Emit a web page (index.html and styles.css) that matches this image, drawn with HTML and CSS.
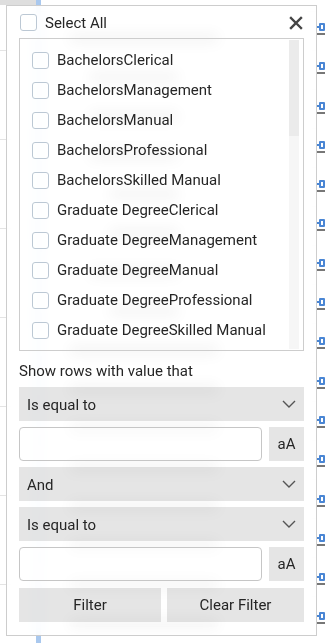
FILE: index.html
```html
<!DOCTYPE html>
<html>
<head>
<meta charset="utf-8">
<link rel="stylesheet" href="styles.css">
</head>
<body>
<div class="bg">
  <div class="bg-left"><div class="bg-corner"></div></div>
  <div class="bg-stripe"></div>
  <div class="bg-main">
    <div class="bg-row"><i class="ghost g1"></i></div>
    <div class="bg-row"><i class="ghost g2"></i></div>
    <div class="bg-row"><i class="ghost g2"></i></div>
    <div class="bg-row"><i class="ghost g2"></i></div>
    <div class="bg-row"><i class="ghost g3"></i></div>
    <div class="bg-row"><i class="ghost g3"></i></div>
    <div class="bg-row"><i class="ghost g2"></i></div>
    <div class="bg-row"><i class="ghost g3"></i></div>
    <div class="bg-row"><i class="ghost g1"></i></div>
    <div class="bg-row"><i class="ghost g1"></i></div>
    <div class="bg-row"><i class="ghost g1"></i></div>
    <div class="bg-row"><i class="ghost g1"></i></div>
    <div class="bg-row"><i class="ghost g1"></i></div>
    <div class="bg-row"><i class="ghost g1"></i></div>
    <div class="bg-row"><i class="ghost g1"></i></div>
    <div class="bg-row"><i class="ghost g1"></i></div>
  </div>
  <div class="bg-right">
    <div class="link"><i class="lk-line"></i><i class="lk-box"></i></div>
    <div class="link"><i class="lk-line"></i><i class="lk-box"></i></div>
    <div class="link"><i class="lk-line"></i><i class="lk-box"></i></div>
    <div class="link"><i class="lk-line"></i><i class="lk-box"></i></div>
    <div class="link"><i class="lk-line"></i><i class="lk-box"></i></div>
    <div class="link"><i class="lk-line"></i><i class="lk-box"></i></div>
    <div class="link"><i class="lk-line"></i><i class="lk-box"></i></div>
    <div class="link"><i class="lk-line"></i><i class="lk-box"></i></div>
    <div class="link"><i class="lk-line"></i><i class="lk-box"></i></div>
    <div class="link"><i class="lk-line"></i><i class="lk-box"></i></div>
    <div class="link"><i class="lk-line"></i><i class="lk-box"></i></div>
    <div class="link"><i class="lk-line"></i><i class="lk-box"></i></div>
    <div class="link"><i class="lk-line"></i><i class="lk-box"></i></div>
    <div class="link"><i class="lk-line"></i><i class="lk-box"></i></div>
    <div class="link"><i class="lk-line"></i><i class="lk-box"></i></div>
    <div class="link"><i class="lk-line"></i><i class="lk-box"></i></div>
  </div>
</div>

<div class="popup">
  <div class="head">
    <span class="cb"></span>
    <span class="head-label">Select All</span>
    <svg class="close" width="14" height="14" viewBox="0 0 14 14"><path d="M2 2 L12 12 M12 2 L2 12" stroke="#444" stroke-width="2.4" stroke-linecap="square" fill="none"/></svg>
  </div>
  <div class="list">
    <div class="item"><span class="cb"></span><span>BachelorsClerical</span></div>
    <div class="item"><span class="cb"></span><span>BachelorsManagement</span></div>
    <div class="item"><span class="cb"></span><span>BachelorsManual</span></div>
    <div class="item"><span class="cb"></span><span>BachelorsProfessional</span></div>
    <div class="item"><span class="cb"></span><span>BachelorsSkilled Manual</span></div>
    <div class="item"><span class="cb"></span><span>Graduate DegreeClerical</span></div>
    <div class="item"><span class="cb"></span><span>Graduate DegreeManagement</span></div>
    <div class="item"><span class="cb"></span><span>Graduate DegreeManual</span></div>
    <div class="item"><span class="cb"></span><span>Graduate DegreeProfessional</span></div>
    <div class="item"><span class="cb"></span><span>Graduate DegreeSkilled Manual</span></div>
    <div class="scrollbar"><div class="thumb"></div></div>
  </div>
  <div class="label">Show rows with value that</div>
  <div class="controls">
    <div class="select"><span>Is equal to</span><svg class="chev" width="14" height="8" viewBox="0 0 14 8"><path d="M1 1 L7 7 L13 1" stroke="#555" stroke-width="1.4" fill="none"/></svg></div>
    <div class="input-row"><div class="input"></div><div class="case">aA</div></div>
    <div class="select"><span>And</span><svg class="chev" width="14" height="8" viewBox="0 0 14 8"><path d="M1 1 L7 7 L13 1" stroke="#555" stroke-width="1.4" fill="none"/></svg></div>
    <div class="select"><span>Is equal to</span><svg class="chev" width="14" height="8" viewBox="0 0 14 8"><path d="M1 1 L7 7 L13 1" stroke="#555" stroke-width="1.4" fill="none"/></svg></div>
    <div class="input-row"><div class="input"></div><div class="case">aA</div></div>
    <div class="buttons"><div class="btn btn-filter">Filter</div><div class="btn btn-clear">Clear Filter</div></div>
  </div>
</div>
</body>
</html>
```
FILE: styles.css
```css
* { box-sizing: border-box; }
html, body { margin: 0; padding: 0; }
body {
  width: 325px;
  height: 643px;
  overflow: hidden;
  position: relative;
  background: #fff;
  font-family: Roboto, "Liberation Sans", sans-serif;
  color: #262626;
}

/* background page */
.bg {
  display: flex;
  height: 643px;
}
.bg-left {
  width: 36px;
  background: repeating-linear-gradient(to bottom, transparent 0 50px, #e4e4e4 50px 51px, transparent 51px 89px);
}
.bg-corner {
  height: 5px;
  background: #dedede;
}
.bg-stripe {
  width: 5px;
  background: #a9c8ee;
}
.bg-main {
  flex: 1;
  display: flex;
  flex-direction: column;
  padding-top: 11px;
}
.bg-row {
  height: 39px;
  flex: none;
  border-top: 1px solid #e4e4e4;
  display: flex;
  align-items: flex-end;
  padding-left: 28px;
  padding-bottom: 8px;
}
.ghost {
  display: block;
  height: 8px;
  border-radius: 4px;
  background: #8a8a8a;
}
.g1 { width: 150px; }
.g2 { width: 90px; margin-left: 20px; }
.g3 { width: 70px; margin-left: 40px; }
.bg-right {
  width: 9px;
  display: flex;
  flex-direction: column;
  padding-top: 23px;
  gap: 31.3px;
}
.link {
  height: 8px;
  display: flex;
  align-items: center;
  position: relative;
}
.lk-line {
  width: 3px;
  height: 2px;
  background: #4a86d4;
  display: block;
}
.lk-box {
  width: 7px;
  height: 8px;
  border: 2px solid #4a86d4;
  border-radius: 1px;
  display: block;
}
.link::after {
  content: "";
  position: absolute;
  left: 1px;
  right: 0;
  bottom: -4px;
  height: 2px;
  background: #777;
}

/* popup */
.popup {
  position: absolute;
  left: 6px;
  top: 5px;
  width: 311px;
  height: 631px;
  border: 1px solid #cdcdcd;
  background: rgba(255, 255, 255, 0.88);
  backdrop-filter: blur(7px);
  padding: 0 12px 13px 12px;
  display: flex;
  flex-direction: column;
}
.head {
  height: 32px;
  display: flex;
  align-items: center;
  padding-left: 1px;
  padding-top: 1px;
}
.cb {
  width: 17px;
  height: 17px;
  border: 1px solid #bcc8d4;
  border-radius: 3px;
  background: rgba(255, 255, 255, 0.5);
  flex: none;
}
.head-label {
  font-size: 15px;
  margin-left: 8px;
  flex: 1;
}
.close {
  margin-right: 1px;
}
.list {
  position: relative;
  height: 313px;
  border: 1px solid #cdcdcd;
  padding: 6px 12px 5px 12px;
}
.item {
  height: 30px;
  display: flex;
  align-items: center;
  font-size: 15px;
  white-space: nowrap;
}
.item span:last-child {
  margin-left: 8px;
}
.scrollbar {
  position: absolute;
  right: 4px;
  top: 1px;
  bottom: 1px;
  width: 10px;
  background: rgba(240, 240, 240, 0.6);
}
.thumb {
  height: 96px;
  background: #ebebeb;
}
.label {
  font-size: 15px;
  line-height: 20px;
  margin: 10px 0 6px 0;
}
.controls {
  display: flex;
  flex-direction: column;
  gap: 6px;
}
.select {
  height: 34px;
  background: rgba(0, 0, 0, 0.1);
  display: flex;
  align-items: center;
  justify-content: space-between;
  padding: 2px 8px 0 8px;
  font-size: 15px;
}
.chev { margin-top: -3px; }
.input-row {
  display: flex;
  gap: 7px;
  height: 34px;
}
.input {
  flex: 1;
  border: 1px solid #c6c6c6;
  border-radius: 4px;
  background: rgba(255, 255, 255, 0.4);
}
.case {
  width: 35px;
  background: rgba(0, 0, 0, 0.1);
  display: flex;
  align-items: center;
  justify-content: center;
  font-size: 15px;
}
.buttons {
  display: flex;
  gap: 6px;
  height: 34px;
  margin-top: 1px;
}
.btn {
  background: rgba(0, 0, 0, 0.1);
  display: flex;
  align-items: center;
  justify-content: center;
  font-size: 15px;
}
.btn-filter { width: 142px; }
.btn-clear { flex: 1; }
```
